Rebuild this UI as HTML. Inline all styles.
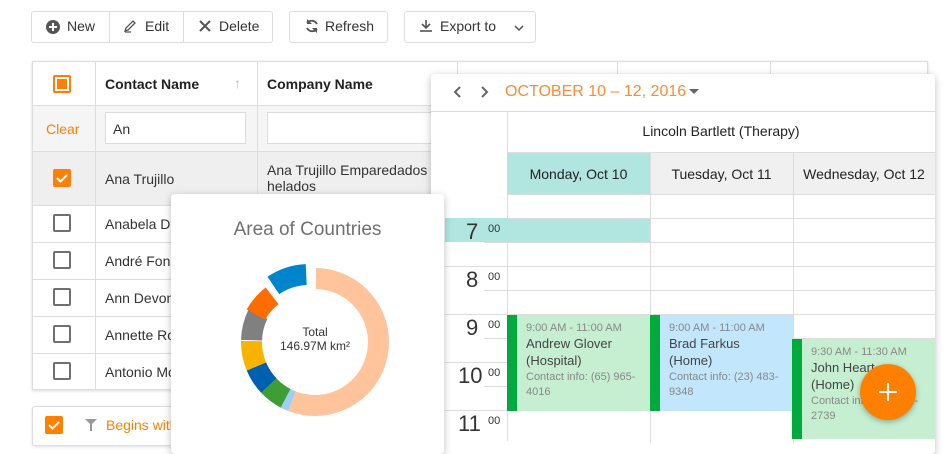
<!DOCTYPE html>
<html><head><meta charset="utf-8"><style>
*{box-sizing:border-box;margin:0;padding:0}
body{width:950px;height:437px;overflow:hidden;background:#fff;font-family:"Liberation Sans",sans-serif;font-size:14px;color:#333;position:relative}
.abs{position:absolute}
.btn{position:absolute;top:11px;height:32px;border:1px solid #ddd;border-radius:3px;background:#fff;color:#333;font-size:14px;line-height:30px}
.cb{position:absolute;width:18px;height:18px;border:2px solid #707070;border-radius:2px;background:#fff}
.cbo{position:absolute;width:18px;height:18px;background:#ff8000;border-radius:2px}
.vl{position:absolute;width:1px;background:#ddd}
.hl{position:absolute;height:1px;background:#ddd}
.t{position:absolute;white-space:nowrap}
</style></head><body>

<!-- toolbar -->
<div class="btn" style="left:31px;width:242px"></div>
<div class="vl" style="left:109px;top:12px;height:30px"></div>
<div class="vl" style="left:183px;top:12px;height:30px"></div>
<svg class="abs" style="left:45px;top:19px" width="16" height="16"><circle cx="8" cy="8" r="7" fill="#555"/><path d="M8 4v8M4 8h8" stroke="#fff" stroke-width="2"/></svg>
<div class="t" style="left:67px;top:18px">New</div>
<svg class="abs" style="left:123px;top:18px" width="16" height="16"><path d="M2 13l1-3 7-7 2 2-7 7z M2 14h6" stroke="#555" stroke-width="1.3" fill="none"/></svg>
<div class="t" style="left:145px;top:18px">Edit</div>
<svg class="abs" style="left:198px;top:19px" width="14" height="14"><path d="M2 2l10 10M12 2L2 12" stroke="#555" stroke-width="2"/></svg>
<div class="t" style="left:219px;top:18px">Delete</div>
<div class="btn" style="left:289px;width:99px"></div>
<svg class="abs" style="left:304px;top:18px" width="16" height="16"><path d="M13 6A6 6 0 0 0 3 5M3 10a6 6 0 0 0 10 1" stroke="#555" stroke-width="1.8" fill="none"/><path d="M3 1v5h5z M13 15v-5H8z" fill="#555"/></svg>
<div class="t" style="left:325px;top:18px">Refresh</div>
<div class="btn" style="left:404px;width:132px"></div>
<svg class="abs" style="left:419px;top:18px" width="14" height="16"><path d="M7 2v8M3 6l4 4 4-4" stroke="#555" stroke-width="1.6" fill="none"/><path d="M1 13h12" stroke="#555" stroke-width="1.6"/></svg>
<div class="t" style="left:440px;top:18px">Export to</div>
<svg class="abs" style="left:513px;top:24px" width="12" height="8"><path d="M2 2l4 4 4-4" stroke="#555" stroke-width="1.5" fill="none"/></svg>

<!-- grid -->
<div class="abs" style="left:32px;top:61px;width:896px;height:329px;border:1px solid #ddd;box-shadow:0 1px 3px rgba(0,0,0,.15)"></div>
<div class="abs" style="left:33px;top:105px;width:894px;height:46px;background:#f5f5f5"></div>
<div class="abs" style="left:33px;top:151px;width:894px;height:54px;background:#efefef"></div>
<div class="hl" style="left:33px;top:105px;width:894px"></div>
<div class="hl" style="left:33px;top:151px;width:894px"></div>
<div class="hl" style="left:33px;top:205px;width:894px"></div>
<div class="hl" style="left:33px;top:242px;width:894px"></div>
<div class="hl" style="left:33px;top:279px;width:894px"></div>
<div class="hl" style="left:33px;top:316px;width:894px"></div>
<div class="hl" style="left:33px;top:353px;width:894px"></div>
<div class="vl" style="left:95px;top:62px;height:327px"></div>
<div class="vl" style="left:257px;top:62px;height:327px"></div>
<div class="vl" style="left:457px;top:62px;height:327px"></div>
<div class="vl" style="left:617px;top:62px;height:327px"></div>
<div class="vl" style="left:770px;top:62px;height:327px"></div>
<div class="abs" style="left:53px;top:75px;width:18px;height:18px;border:2px solid #ff8000;border-radius:2px;background:#fff"><div style="margin:2px;width:10px;height:10px;background:#ff8000"></div></div>
<div class="t" style="left:105px;top:76px;font-weight:bold;color:#222">Contact Name</div>
<div class="t" style="left:234px;top:75px;color:#bbb">↑</div>
<div class="t" style="left:267px;top:76px;font-weight:bold;color:#222">Company Name</div>
<div class="t" style="left:46px;top:121px;color:#ff8000">Clear</div>
<div class="abs" style="left:105px;top:112px;width:141px;height:32px;border:1px solid #ddd;background:#fff"></div>
<div class="t" style="left:113px;top:121px">An</div>
<div class="abs" style="left:267px;top:112px;width:170px;height:32px;border:1px solid #ddd;background:#fff"></div>
<div class="cbo" style="left:53px;top:169px"><svg width="18" height="18"><path d="M4 9l3.5 3.5L14 6" stroke="#fff" stroke-width="2" fill="none"/></svg></div>
<div class="t" style="left:105px;top:171px">Ana Trujillo</div>
<div class="t" style="left:267px;top:162px;line-height:16px">Ana Trujillo Emparedados y<br>helados</div>
<div class="cb" style="left:53px;top:214px"></div><div class="t" style="left:105px;top:216px">Anabela Domingues</div>
<div class="cb" style="left:53px;top:251px"></div><div class="t" style="left:105px;top:253px">André Fonseca</div>
<div class="cb" style="left:53px;top:288px"></div><div class="t" style="left:105px;top:290px">Ann Devon</div>
<div class="cb" style="left:53px;top:325px"></div><div class="t" style="left:105px;top:327px">Annette Roulet</div>
<div class="cb" style="left:53px;top:362px"></div><div class="t" style="left:105px;top:364px">Antonio Moreno</div>

<!-- filter panel -->
<div class="abs" style="left:32px;top:406px;width:420px;height:40px;border:1px solid #ddd;border-radius:3px;box-shadow:0 1px 3px rgba(0,0,0,.12)"></div>
<div class="cbo" style="left:45px;top:416px"><svg width="18" height="18"><path d="M4 9l3.5 3.5L14 6" stroke="#fff" stroke-width="2" fill="none"/></svg></div>
<svg class="abs" style="left:85px;top:419px" width="12" height="12"><path d="M0 0h12L7 5v7H5V5z" fill="#999"/></svg>
<div class="t" style="left:106px;top:417px;color:#ff8000">Begins with</div>

<!-- scheduler -->
<div class="abs" style="left:431px;top:74px;width:504px;height:380px;background:#fff;border-radius:4px;box-shadow:0 2px 8px rgba(0,0,0,.25)"></div>
<svg class="abs" style="left:452px;top:85px" width="40" height="14"><path d="M8 2L3 7l5 5M30 2l5 5-5 5" stroke="#666" stroke-width="2" fill="none"/></svg>
<div class="t" style="left:505px;top:83px;color:#ff8a33;font-size:16px">OCTOBER 10 – 12, 2016</div>
<svg class="abs" style="left:689px;top:89px" width="10" height="6"><path d="M0 0h10L5 5z" fill="#666"/></svg>
<div class="hl" style="left:431px;top:111px;width:504px"></div>
<div class="vl" style="left:507px;top:111px;height:330px"></div>
<div class="t" style="left:507px;top:123px;width:428px;text-align:center;color:#222">Lincoln Bartlett (Therapy)</div>
<div class="hl" style="left:507px;top:152px;width:428px"></div>
<div class="abs" style="left:507px;top:153px;width:143px;height:41px;background:#b0e5e0"></div>
<div class="abs" style="left:650px;top:153px;width:285px;height:41px;background:#f0f0f0"></div>
<div class="vl" style="left:650px;top:153px;height:290px"></div>
<div class="vl" style="left:793px;top:153px;height:290px"></div>
<div class="t" style="left:507px;top:166px;width:143px;text-align:center;color:#222">Monday, Oct 10</div>
<div class="t" style="left:650px;top:166px;width:143px;text-align:center;color:#222">Tuesday, Oct 11</div>
<div class="t" style="left:793px;top:166px;width:142px;text-align:center;color:#222">Wednesday, Oct 12</div>
<div class="hl" style="left:507px;top:194px;width:428px"></div>
<div class="abs" style="left:445px;top:218px;width:205px;height:24px;background:#b0e5e0"></div>
<div class="hl" style="left:507px;top:218px;width:428px"></div>
<div class="hl" style="left:507px;top:242px;width:428px"></div>
<div class="hl" style="left:445px;top:266px;width:490px"></div>
<div class="hl" style="left:507px;top:290px;width:428px"></div><div class="hl" style="left:484px;top:290px;width:23px"></div>
<div class="hl" style="left:445px;top:314px;width:490px"></div>
<div class="hl" style="left:507px;top:338px;width:428px"></div><div class="hl" style="left:484px;top:338px;width:23px"></div>
<div class="hl" style="left:445px;top:362px;width:490px"></div>
<div class="hl" style="left:507px;top:386px;width:428px"></div><div class="hl" style="left:484px;top:386px;width:23px"></div>
<div class="hl" style="left:445px;top:410px;width:490px"></div>
<div class="hl" style="left:484px;top:242px;width:23px"></div>
<div class="t" style="left:466px;top:219px;font-size:22px;color:#333">7</div><div class="t" style="left:488px;top:223px;font-size:11px">00</div>
<div class="t" style="left:466px;top:267px;font-size:22px;color:#333">8</div><div class="t" style="left:488px;top:271px;font-size:11px">00</div>
<div class="t" style="left:466px;top:315px;font-size:22px;color:#333">9</div><div class="t" style="left:488px;top:319px;font-size:11px">00</div>
<div class="t" style="left:458px;top:363px;font-size:22px;color:#333">10</div><div class="t" style="left:488px;top:367px;font-size:11px">00</div>
<div class="t" style="left:458px;top:411px;font-size:22px;color:#333">11</div><div class="t" style="left:488px;top:415px;font-size:11px">00</div>

<div class="abs" style="left:507px;top:315px;width:143px;height:96px;background:#c6efd2;border-left:10px solid #00aa3c"></div>
<div class="abs" style="left:526px;top:321px;font-size:11px;color:#888;line-height:15px">9:00 AM - 11:00 AM<br><span style="font-size:13px;color:#444">Andrew Glover<br>(Hospital)</span><br>Contact info: (65) 965-<br>4016</div>
<div class="abs" style="left:650px;top:315px;width:143px;height:96px;background:#c2e6fb;border-left:10px solid #00aa3c"></div>
<div class="abs" style="left:669px;top:321px;font-size:11px;color:#888;line-height:15px">9:00 AM - 11:00 AM<br><span style="font-size:13px;color:#444">Brad Farkus<br>(Home)</span><br>Contact info: (23) 483-<br>9348</div>
<div class="abs" style="left:792px;top:339px;width:143px;height:100px;background:#c6efd2;border-left:10px solid #00aa3c"></div>
<div class="abs" style="left:811px;top:345px;font-size:11px;color:#888;line-height:15px">9:30 AM - 11:30 AM<br><span style="font-size:13px;color:#444">John Heart<br>(Home)</span><br>Contact info: (11) 111-<br>2739</div>
<div class="abs" style="left:860px;top:364px;width:56px;height:56px;border-radius:50%;background:#ff8000;box-shadow:0 2px 6px rgba(0,0,0,.3)"></div>
<svg class="abs" style="left:877px;top:381px" width="22" height="22"><path d="M11 2v18M2 11h18" stroke="#fff" stroke-width="2"/></svg>

<!-- chart -->
<div class="abs" style="left:171px;top:194px;width:273px;height:260px;background:#fff;border-radius:4px;box-shadow:0 2px 8px rgba(0,0,0,.25)"></div>
<div class="t" style="left:171px;top:219px;width:273px;text-align:center;font-size:19px;color:#707070">Area of Countries</div>
<svg class="abs" style="left:171px;top:194px" width="273" height="243">
<g transform="translate(144,148) rotate(-90)" fill="none" stroke-width="21">
<circle r="63.5" stroke="#ffc49b" stroke-dasharray="222 400" stroke-dashoffset="-1"/>
<circle r="63.5" stroke="#9ecff0" stroke-dasharray="7 400" stroke-dashoffset="-223"/>
<circle r="63.5" stroke="#3c9e35" stroke-dasharray="21 400" stroke-dashoffset="-230"/>
<circle r="63.5" stroke="#0060b0" stroke-dasharray="23 400" stroke-dashoffset="-251"/>
<circle r="63.5" stroke="#f6b400" stroke-dasharray="26 400" stroke-dashoffset="-274"/>
<circle r="63.5" stroke="#808080" stroke-dasharray="27 400" stroke-dashoffset="-301"/>
<g transform="translate(-4,-4)"><circle r="63.5" stroke="#ff6c00" stroke-dasharray="25 400" stroke-dashoffset="-332"/></g>
<g transform="translate(4,-6)"><circle r="63.5" stroke="#0085cc" stroke-dasharray="35 400" stroke-dashoffset="-361"/></g>
</g>
<text x="144" y="142" text-anchor="middle" font-family="Liberation Sans" font-size="12" fill="#333">Total</text>
<text x="144" y="156" text-anchor="middle" font-family="Liberation Sans" font-size="12" fill="#333">146.97M km²</text>
</svg>
</body></html>
